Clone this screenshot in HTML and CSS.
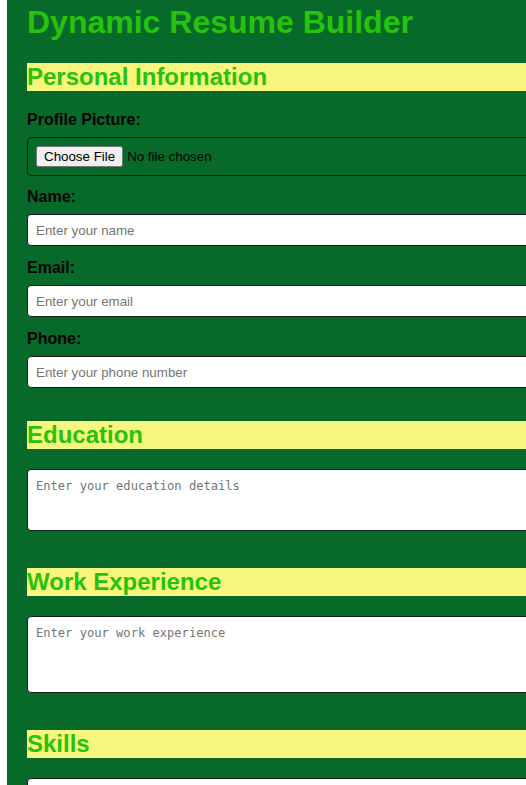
FILE: index.html
```html
<!DOCTYPE html>
<html lang="en">
<head>
<meta charset="utf-8">
<title>Dynamic Resume Builder</title>
<link rel="stylesheet" href="styles.css">
</head>
<body>
<div class="container">
  <h1 class="title">Dynamic Resume Builder</h1>
  <form class="form">
    <section class="section">
      <h2 class="section-title">Personal Information</h2>
      <label class="label" for="pic">Profile Picture:</label>
      <input class="field file-field" type="file" id="pic">
      <label class="label" for="name">Name:</label>
      <input class="field text-field" type="text" id="name" placeholder="Enter your name">
      <label class="label" for="email">Email:</label>
      <input class="field text-field" type="email" id="email" placeholder="Enter your email">
      <label class="label" for="phone">Phone:</label>
      <input class="field text-field" type="tel" id="phone" placeholder="Enter your phone number">
    </section>
    <section class="section">
      <h2 class="section-title">Education</h2>
      <textarea class="field area area-short" placeholder="Enter your education details"></textarea>
    </section>
    <section class="section">
      <h2 class="section-title">Work Experience</h2>
      <textarea class="field area area-tall" placeholder="Enter your work experience"></textarea>
    </section>
    <section class="section">
      <h2 class="section-title">Skills</h2>
      <textarea class="field area area-short" placeholder="Enter your skills"></textarea>
    </section>
  </form>
</div>
</body>
</html>
```
FILE: styles.css
```css
html, body {
  margin: 0;
  padding: 0;
  background: #ffffff;
  overflow: hidden;
}

body {
  font-family: "Liberation Sans", Arial, sans-serif;
}

.container {
  margin-left: 7px;
  width: 760px;
  padding: 3.5px 20px 40px;
  background: #076a2a;
  min-height: 900px;
}

.title {
  margin: 0 0 22.7px;
  font-size: 32px;
  font-weight: bold;
  color: #27c30c;
}

.section-title {
  margin: 32.6px 0 20px;
  font-size: 24px;
  font-weight: bold;
  color: #27c30c;
  background: #f9f680;
}

.section:first-child .section-title {
  margin-top: 0;
}

.label {
  display: block;
  margin-bottom: 8px;
  font-size: 16px;
  font-weight: bold;
  color: #000000;
}

.field {
  display: block;
  box-sizing: border-box;
  width: 100%;
  border: 1px solid #1b1b1b;
  border-radius: 4px;
  background: #ffffff;
  font-family: "Liberation Sans", Arial, sans-serif;
  font-size: 13.33px;
  margin: 0 0 12.8px;
}

.file-field {
  background: transparent;
  padding: 8px;
  height: 38.5px;
  color: #000000;
}

.text-field {
  height: 32px;
  padding: 0 8px;
}

.field::placeholder {
  color: #757575;
}

.area {
  padding: 9px 8px 8px;
  resize: none;
  font-family: "DejaVu Sans Mono", "Liberation Mono", monospace;
  font-size: 12.1px;
  margin-bottom: 37px;
}

.area-short {
  height: 62px;
}

.area-tall {
  height: 77px;
}
```
